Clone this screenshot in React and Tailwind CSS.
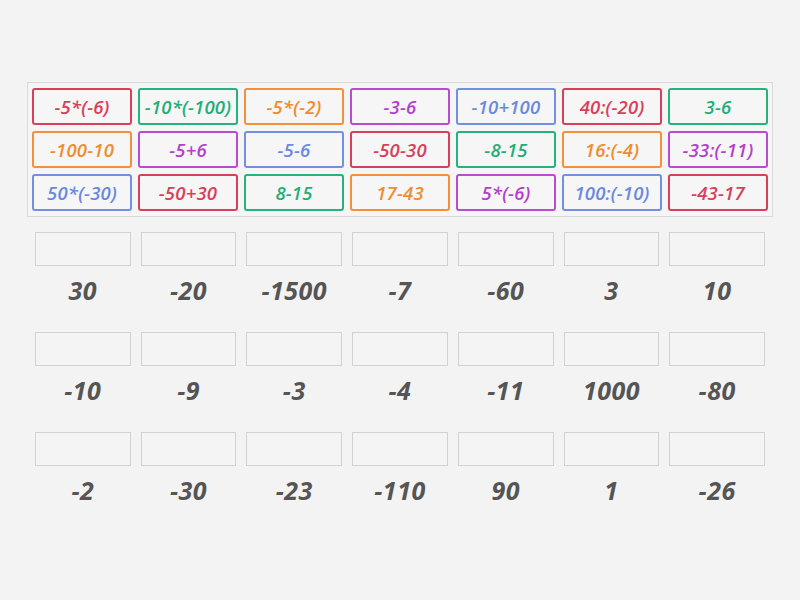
import React from 'react'

const C = {
  red: 'border-[#d8405a] text-[#d8405a]',
  green: 'border-[#25b27c] text-[#1fae76]',
  orange: 'border-[#f3913a] text-[#f08c2c]',
  purple: 'border-[#b94bd0] text-[#b43fcd]',
  blue: 'border-[#7190e2] text-[#6a89de]',
}

const tiles = [
  ['-5*(-6)', 'red'], ['-10*(-100)', 'green'], ['-5*(-2)', 'orange'], ['-3-6', 'purple'], ['-10+100', 'blue'], ['40:(-20)', 'red'], ['3-6', 'green'],
  ['-100-10', 'orange'], ['-5+6', 'purple'], ['-5-6', 'blue'], ['-50-30', 'red'], ['-8-15', 'green'], ['16:(-4)', 'orange'], ['-33:(-11)', 'purple'],
  ['50*(-30)', 'blue'], ['-50+30', 'red'], ['8-15', 'green'], ['17-43', 'orange'], ['5*(-6)', 'purple'], ['100:(-10)', 'blue'], ['-43-17', 'red'],
]

const answers = [
  ['30', '-20', '-1500', '-7', '-60', '3', '10'],
  ['-10', '-9', '-3', '-4', '-11', '1000', '-80'],
  ['-2', '-30', '-23', '-110', '90', '1', '-26'],
]

const font = { fontFamily: '"Open Sans", "Noto Sans", sans-serif' }

export default function App() {
  return (
    <div className="w-[800px] h-[600px] bg-[#f4f3f3] overflow-hidden pt-[82px]" style={font}>
      {/* tiles */}
      <div className="mx-auto w-[746px] border border-[#d9d9d9] bg-[#f5f5f5] px-[4px] py-[5px]">
        <div className="grid grid-cols-7 gap-x-[6px] gap-y-[6px]">
          {tiles.map(([t, c], i) => (
            <div key={i}
              className={`h-[37px] rounded-[3px] border-2 bg-[#f6f6f6] flex items-center justify-center italic font-semibold text-[18.5px] tracking-[0.2px] ${C[c]}`}>
              {t}
            </div>
          ))}
        </div>
      </div>

      {/* answer slots */}
      <div className="mx-auto w-[730px] mt-[15px] flex flex-col gap-y-[16px]">
        {answers.map((row, r) => (
          <div key={r} className="grid grid-cols-7 gap-x-[10px]">
            {row.map((a, i) => (
              <div key={i} className="flex flex-col">
                <div className="h-[34px] border border-[#d2d2d2] bg-[#f4f4f4]" />
                <div className="h-[50px] flex items-center justify-center italic font-bold text-[25px] tracking-[0.5px] text-[#555555]">
                  {a}
                </div>
              </div>
            ))}
          </div>
        ))}
      </div>
    </div>
  )
}
